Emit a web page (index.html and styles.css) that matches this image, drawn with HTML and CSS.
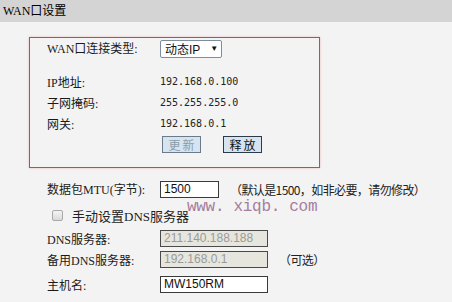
FILE: index.html
```html
<!DOCTYPE html>
<html lang="zh-CN">
<head>
  <meta charset="UTF-8">
  <title>WAN口设置</title>
  <link rel="stylesheet" href="styles.css">
</head>
<body>
  <div class="title-bar">WAN口设置</div>

  <div class="wan-box">
    <div class="row row-type">
      <span class="label">WAN口连接类型:</span>
      <span class="fake-select">动态IP <span class="arrow">▼</span></span>
    </div>
    <div class="row row-info first">
      <span class="label">IP地址:</span>
      <span class="value">192.168.0.100</span>
    </div>
    <div class="row row-info">
      <span class="label">子网掩码:</span>
      <span class="value">255.255.255.0</span>
    </div>
    <div class="row row-info">
      <span class="label">网关:</span>
      <span class="value">192.168.0.1</span>
    </div>
    <div class="row row-buttons">
      <span class="label"></span>
      <div class="btns">
        <button class="btn disabled">更新</button>
        <button class="btn">释放</button>
      </div>
    </div>
  </div>

  <div class="settings">
    <div class="row row-mtu">
      <span class="label">数据包MTU(字节):</span>
      <span class="field short">1500</span>
      <span class="hint">（默认是1500，如非必要，请勿修改）</span>
    </div>
    <div class="watermark">www. xiqb. com</div>
    <div class="row row-check">
      <span class="checkbox"></span>
      <span class="check-label">手动设置DNS服务器</span>
    </div>
    <div class="row row-dns">
      <span class="label">DNS服务器:</span>
      <span class="field off">211.140.188.188</span>
    </div>
    <div class="row row-dns">
      <span class="label">备用DNS服务器:</span>
      <span class="field off">192.168.0.1</span>
      <span class="hint">（可选）</span>
    </div>
    <div class="row row-host">
      <span class="label">主机名:</span>
      <span class="field">MW150RM</span>
    </div>
  </div>
</body>
</html>
```

FILE: styles.css
```css
* {
  margin: 0;
  padding: 0;
  box-sizing: border-box;
}

body {
  background-color: #f3f3f3;
  color: #222;
  font-family: 'Liberation Serif', 'Noto Sans CJK SC', serif;
  font-size: 12px;
  width: 452px;
  height: 302px;
  overflow: hidden;
  position: relative;
}

.title-bar {
  height: 22px;
  background-color: #d4d4d4;
  padding-left: 3px;
  line-height: 22px;
  font-size: 12px;
  color: #000;
}

.wan-box {
  margin: 15px 0 0 29px;
  width: 291px;
  border: 1px solid #c24a4a;
  box-shadow: 0 0 2px rgba(230, 120, 120, 0.5);
  padding: 0 0 12px 17px;
}

.row {
  display: flex;
  align-items: center;
}

.label {
  width: 113px;
  flex-shrink: 0;
  color: #1a1a1a;
}

.row-type {
  height: 20px;
}

.row-info {
  height: 21px;
}

.row-info.first {
  margin-top: 13px;
}

.value {
  font-family: 'DejaVu Sans Mono', monospace;
  font-size: 10px;
  color: #222;
}

.fake-select {
  width: 62px;
  height: 18px;
  margin-top: 1px;
  background-color: #fff;
  border: 1px solid #7d8d9d;
  border-radius: 2px;
  display: flex;
  align-items: center;
  padding-left: 4px;
  font-family: 'Liberation Sans', 'Noto Sans CJK SC', sans-serif;
  font-size: 12px;
  color: #111;
}

.arrow {
  font-size: 8px;
  margin-left: 10px;
}

.row-buttons {
  height: 21px;
}

.btns {
  display: flex;
  gap: 22px;
  margin-left: 2px;
}

.btn {
  width: 39px;
  height: 17px;
  background-color: #d6e4ef;
  border: 1px solid #2b3b4b;
  font-family: 'Noto Sans CJK SC', sans-serif;
  font-size: 12px;
  letter-spacing: 2px;
  padding-left: 2px;
  line-height: 15px;
  color: #111;
}

.btn.disabled {
  color: #8d9caa;
  border-color: #6a7a8a;
}

.settings {
  padding-left: 47px;
  margin-top: 11px;
}

.row-mtu {
  height: 20px;
}

.field {
  width: 108px;
  height: 17px;
  border: 1px solid #3a3a3a;
  background-color: #fff;
  padding-left: 3px;
  font-family: 'Liberation Sans', sans-serif;
  font-size: 12px;
  line-height: 15px;
  color: #111;
}

.field.short {
  width: 59px;
}

.field.off {
  background-color: #e6e6de;
  border-color: #4a4a4a;
  color: #9a9a9a;
}

.hint {
  margin-left: 11px;
  font-family: 'Noto Sans CJK SC', sans-serif;
  font-size: 12px;
  color: #222;
  letter-spacing: -0.6px;
}

.watermark {
  position: absolute;
  left: 187px;
  top: 198px;
  font-family: 'Liberation Mono', monospace;
  font-size: 16px;
  color: #a67d9c;
  letter-spacing: -0.3px;
}

.row-check {
  height: 20px;
  margin-top: 6px;
}

.checkbox {
  width: 11px;
  height: 11px;
  margin-left: 5px;
  border: 1px solid #a9a9a9;
  border-radius: 2px;
  background: linear-gradient(#f4f4f4, #d9d9d9);
}

.check-label {
  margin-left: 9px;
  font-size: 13px;
}

.row-check + .row-dns {
  margin-top: 3px;
}

.row-dns {
  height: 21px;
}

.row-host {
  height: 21px;
  margin-top: 4px;
}
```
